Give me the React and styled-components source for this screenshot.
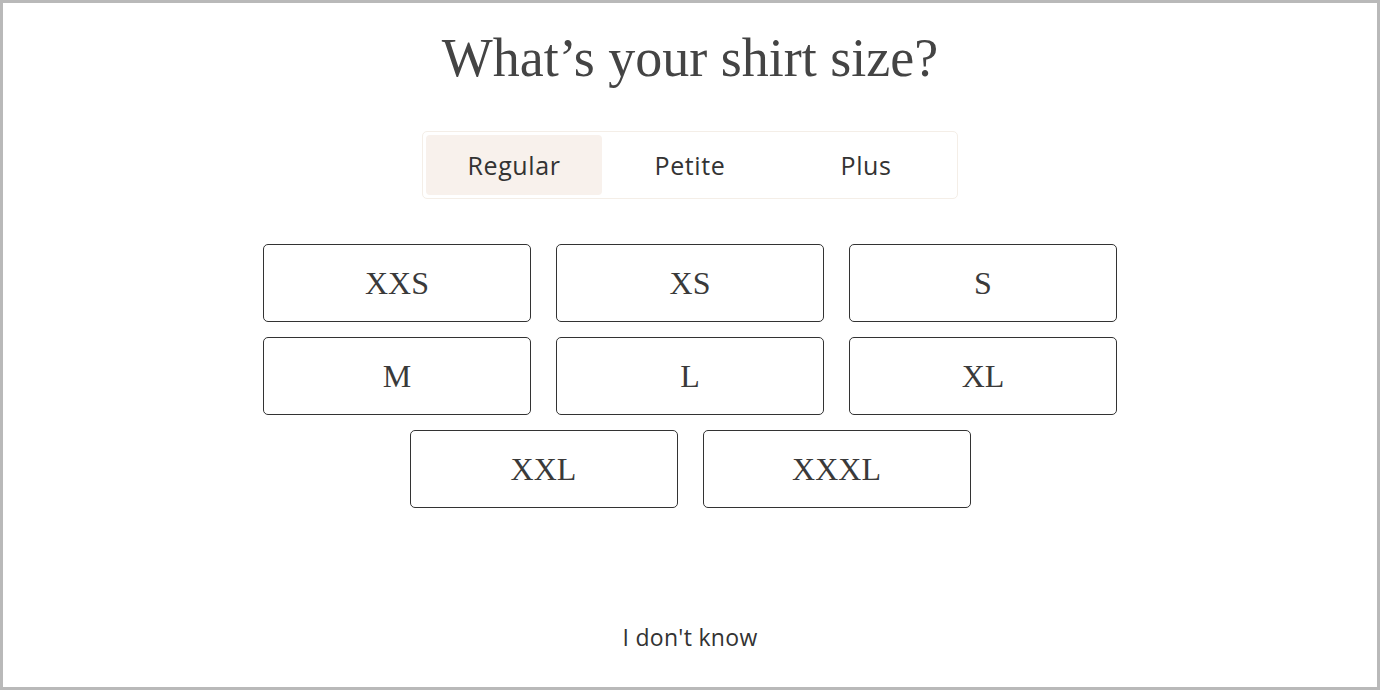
import React, { useState } from "react";
import styled, { createGlobalStyle } from "styled-components";

const GlobalStyle = createGlobalStyle`
  html, body {
    margin: 0;
    padding: 0;
    background: #b9b9b9;
  }
  * { box-sizing: border-box; }
`;

const tabs = ["Regular", "Petite", "Plus"];
const sizeRows = [
  ["XXS", "XS", "S"],
  ["M", "L", "XL"],
  ["XXL", "XXXL"],
];

function App() {
  const [tab, setTab] = useState("Regular");
  const [size, setSize] = useState(null);

  return (
    <>
      <GlobalStyle />
      <Frame>
        <Page>
          <Title>What’s your shirt size?</Title>
          <TabBar>
            {tabs.map((t) => (
              <Tab key={t} $active={t === tab} onClick={() => setTab(t)}>
                {t}
              </Tab>
            ))}
          </TabBar>
          <SizeGrid>
            {sizeRows.map((row, i) => (
              <SizeRow key={i}>
                {row.map((s) => (
                  <SizeButton key={s} $selected={s === size} onClick={() => setSize(s)}>
                    {s}
                  </SizeButton>
                ))}
              </SizeRow>
            ))}
          </SizeGrid>
          <Spacer />
          <SkipLink>I don't know</SkipLink>
        </Page>
      </Frame>
    </>
  );
}

const Frame = styled.div`
  width: 1380px;
  height: 690px;
  padding: 3px;
  background: #b9b9b9;
`;

const Page = styled.div`
  height: 100%;
  background: #fff;
  display: flex;
  flex-direction: column;
  align-items: center;
  padding-top: 23px;
  padding-bottom: 34px;
`;

const Title = styled.h1`
  margin: 0;
  font: 400 54px "Liberation Serif", "DejaVu Serif", serif;
  color: #444;
  line-height: 64px;
`;

const TabBar = styled.div`
  margin-top: 41px;
  display: flex;
  padding: 3px;
  width: 536px;
  border: 1px solid #f4eee7;
  border-radius: 5px;
`;

const Tab = styled.button`
  flex: 1;
  height: 60px;
  border: none;
  border-radius: 4px;
  background: ${(p) => (p.$active ? "#f8f1ec" : "transparent")};
  font: 400 25px "Open Sans", "Liberation Sans", sans-serif;
  color: #333;
  cursor: pointer;
  letter-spacing: 0.6px;
`;

const SizeGrid = styled.div`
  margin-top: 45px;
  display: flex;
  flex-direction: column;
  align-items: center;
  gap: 15px;
`;

const SizeRow = styled.div`
  display: flex;
  gap: 25px;
  justify-content: center;
`;

const SizeButton = styled.button`
  width: 268px;
  height: 78px;
  border: 1px solid #333;
  border-radius: 5px;
  background: ${(p) => (p.$selected ? "#f8f1ec" : "#fff")};
  font: 400 32px "Liberation Serif", "DejaVu Serif", serif;
  color: #3a3a3a;
  cursor: pointer;
`;

const Spacer = styled.div`
  flex: 1;
`;

const SkipLink = styled.a`
  font: 400 23px "Open Sans", "Liberation Sans", sans-serif;
  color: #333;
  letter-spacing: 0.3px;
  cursor: pointer;
`;

export default App;
